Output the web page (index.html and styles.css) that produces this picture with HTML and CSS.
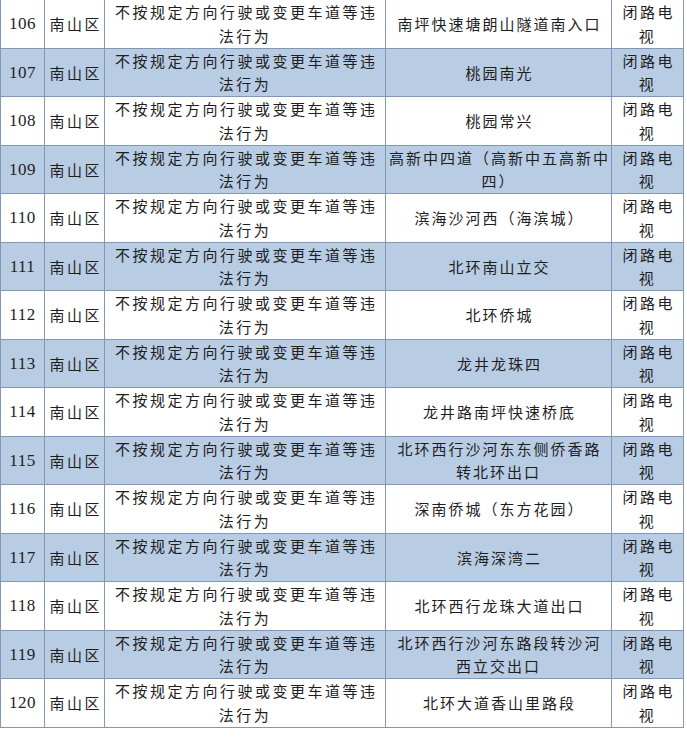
FILE: index.html
```html
<!DOCTYPE html>
<html lang="zh">
<head>
<meta charset="utf-8">
<title>违法行为抓拍点位</title>
<link rel="stylesheet" href="styles.css">
</head>
<body>
<table class="list">
  <colgroup>
    <col class="c-no"><col class="c-area"><col class="c-act"><col class="c-loc"><col class="c-way">
  </colgroup>
  <tbody>
    <tr><td class="no">106</td><td class="area">南山区</td><td>不按规定方向行驶或变更车道等违法行为</td><td class="loc">南坪快速塘朗山隧道南入口</td><td>闭路电视</td></tr>
    <tr class="alt"><td class="no">107</td><td class="area">南山区</td><td>不按规定方向行驶或变更车道等违法行为</td><td class="loc">桃园南光</td><td>闭路电视</td></tr>
    <tr><td class="no">108</td><td class="area">南山区</td><td>不按规定方向行驶或变更车道等违法行为</td><td class="loc">桃园常兴</td><td>闭路电视</td></tr>
    <tr class="alt"><td class="no">109</td><td class="area">南山区</td><td>不按规定方向行驶或变更车道等违法行为</td><td class="loc">高新中四道（高新中五高新中<br>四）</td><td>闭路电视</td></tr>
    <tr><td class="no">110</td><td class="area">南山区</td><td>不按规定方向行驶或变更车道等违法行为</td><td class="loc">滨海沙河西（海滨城）</td><td>闭路电视</td></tr>
    <tr class="alt"><td class="no">111</td><td class="area">南山区</td><td>不按规定方向行驶或变更车道等违法行为</td><td class="loc">北环南山立交</td><td>闭路电视</td></tr>
    <tr><td class="no">112</td><td class="area">南山区</td><td>不按规定方向行驶或变更车道等违法行为</td><td class="loc">北环侨城</td><td>闭路电视</td></tr>
    <tr class="alt"><td class="no">113</td><td class="area">南山区</td><td>不按规定方向行驶或变更车道等违法行为</td><td class="loc">龙井龙珠四</td><td>闭路电视</td></tr>
    <tr><td class="no">114</td><td class="area">南山区</td><td>不按规定方向行驶或变更车道等违法行为</td><td class="loc">龙井路南坪快速桥底</td><td>闭路电视</td></tr>
    <tr class="alt"><td class="no">115</td><td class="area">南山区</td><td>不按规定方向行驶或变更车道等违法行为</td><td class="loc">北环西行沙河东东侧侨香路<br>转北环出口</td><td>闭路电视</td></tr>
    <tr><td class="no">116</td><td class="area">南山区</td><td>不按规定方向行驶或变更车道等违法行为</td><td class="loc">深南侨城（东方花园）</td><td>闭路电视</td></tr>
    <tr class="alt"><td class="no">117</td><td class="area">南山区</td><td>不按规定方向行驶或变更车道等违法行为</td><td class="loc">滨海深湾二</td><td>闭路电视</td></tr>
    <tr><td class="no">118</td><td class="area">南山区</td><td>不按规定方向行驶或变更车道等违法行为</td><td class="loc">北环西行龙珠大道出口</td><td>闭路电视</td></tr>
    <tr class="alt"><td class="no">119</td><td class="area">南山区</td><td>不按规定方向行驶或变更车道等违法行为</td><td class="loc">北环西行沙河东路段转沙河<br>西立交出口</td><td>闭路电视</td></tr>
    <tr><td class="no">120</td><td class="area">南山区</td><td>不按规定方向行驶或变更车道等违法行为</td><td class="loc">北环大道香山里路段</td><td>闭路电视</td></tr>
  </tbody>
</table>
</body>
</html>
```

FILE: styles.css
```css
html, body {
  margin: 0;
  padding: 0;
  background: #ffffff;
}

.list {
  border-collapse: collapse;
  table-layout: fixed;
  width: 683px;
  margin: -1px 0 0 0;
  font-family: "Noto Sans CJK SC", "Noto Sans", sans-serif;
  font-size: 15px;
  color: #1e1e1e;
}

.c-no { width: 44px; }
.c-area { width: 60px; }
.c-act { width: 281px; }
.c-loc { width: 226px; }
.c-way { width: 72px; }

.list td {
  border: 1px solid #8297b3;
  height: 47.5px;
  padding: 0 6px;
  text-align: center;
  vertical-align: middle;
  line-height: 23.5px;
  letter-spacing: 2.5px;
  text-indent: 2.5px;
}

.list td.no {
  font-family: "Liberation Serif", serif;
  font-size: 17px;
  letter-spacing: 0.5px;
  text-indent: 0;
  padding: 0 2px;
}

.list td.area {
  padding: 0 1px;
  white-space: nowrap;
}

.list td.loc {
  padding: 0 1px;
  letter-spacing: 2px;
  text-indent: 2px;
  white-space: nowrap;
}

.list tr.alt td {
  background: #b8cce4;
}
```
